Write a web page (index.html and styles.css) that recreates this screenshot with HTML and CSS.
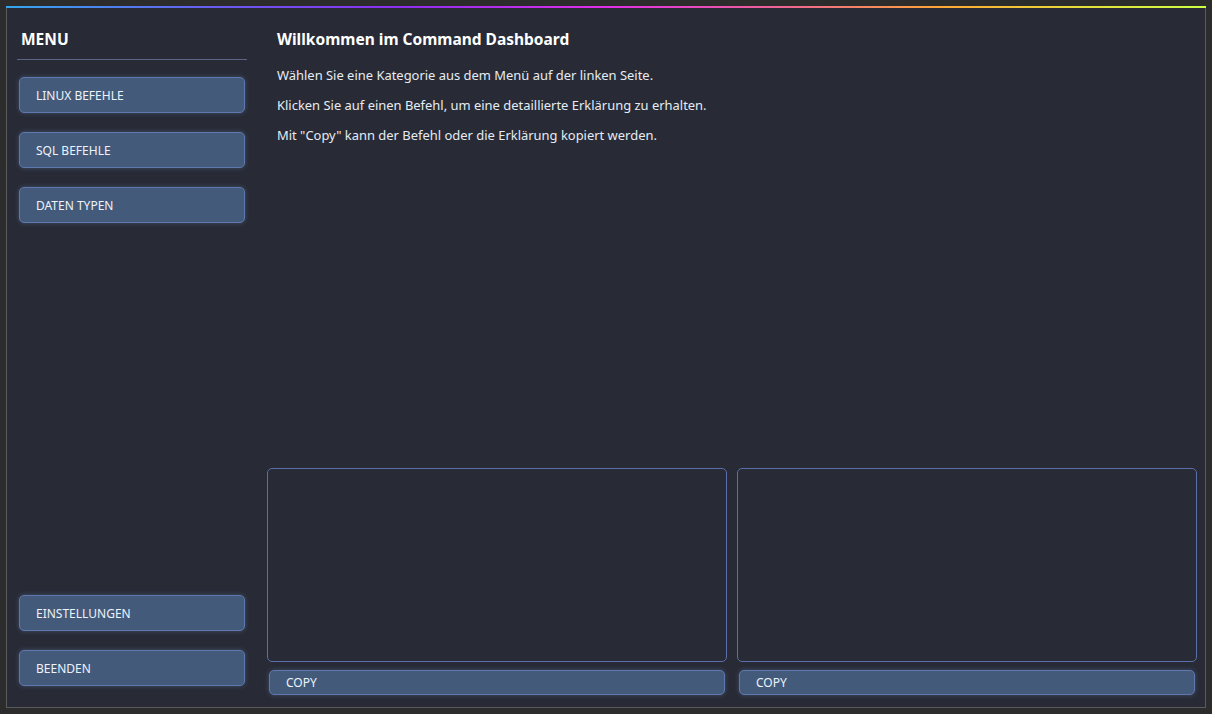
FILE: index.html
```html
<!DOCTYPE html>
<html lang="de">
<head>
<meta charset="utf-8">
<title>Command Dashboard</title>
<link rel="stylesheet" href="styles.css">
</head>
<body>
<div class="frame">
  <div class="app">
    <aside class="sidebar">
      <div class="menu-title">MENU</div>
      <div class="nav">
        <button class="btn nav-btn">LINUX BEFEHLE</button>
        <button class="btn nav-btn">SQL BEFEHLE</button>
        <button class="btn nav-btn">DATEN TYPEN</button>
      </div>
      <div class="nav nav-bottom">
        <button class="btn nav-btn">EINSTELLUNGEN</button>
        <button class="btn nav-btn">BEENDEN</button>
      </div>
    </aside>
    <main class="main">
      <h1 class="title">Willkommen im Command Dashboard</h1>
      <p class="info">Wählen Sie eine Kategorie aus dem Menü auf der linken Seite.</p>
      <p class="info">Klicken Sie auf einen Befehl, um eine detaillierte Erklärung zu erhalten.</p>
      <p class="info">Mit "Copy" kann der Befehl oder die Erklärung kopiert werden.</p>
      <div class="panels">
        <div class="panel">
          <div class="textbox"></div>
          <button class="btn copy-btn">COPY</button>
        </div>
        <div class="panel">
          <div class="textbox"></div>
          <button class="btn copy-btn">COPY</button>
        </div>
      </div>
    </main>
  </div>
</div>
</body>
</html>
```

FILE: styles.css
```css
* { box-sizing: border-box; }
html, body {
  margin: 0;
  padding: 0;
  background: #2c2c2c;
  height: 100%;
}
body {
  font-family: "Noto Sans", "Open Sans", sans-serif;
  color: #eef2f8;
}
.frame {
  padding: 6px;
  height: 714px;
}
.app {
  height: 702px;
  display: flex;
  background: #282b36;
  border-left: 1px solid #5a5a5a;
  border-right: 1px solid #5a5a5a;
  border-bottom: 1px solid #5a5a5a;
  border-top: 2px solid transparent;
  position: relative;
}
.app::before {
  content: "";
  position: absolute;
  left: -1px;
  right: -1px;
  top: -2px;
  height: 2px;
  background: linear-gradient(90deg, #35a6ee 0%, #6a5af0 18%, #8e2ef0 33%, #e22ee8 50%, #f06a8a 66%, #ffa735 78%, #e6e03a 90%, #ccff44 100%);
}
.sidebar {
  width: 250px;
  padding: 21px 10px 21px 10px;
  display: flex;
  flex-direction: column;
}
.menu-title {
  font-size: 15.5px;
  font-weight: 700;
  line-height: 20px;
  padding: 0 4px 10px 4px;
  border-bottom: 1px solid #5d6584;
  color: #ffffff;
}
.nav {
  display: flex;
  flex-direction: column;
  gap: 19px;
  padding: 17px 2px 0 2px;
}
.nav-bottom {
  margin-top: auto;
  padding-top: 0;
}
.btn {
  font-family: inherit;
  display: flex;
  align-items: center;
  background: #435a7a;
  border: 1px solid #5f79b0;
  border-radius: 5px;
  color: #eef3fb;
  text-align: left;
  cursor: pointer;
  box-shadow: 0 0 5px rgba(120, 150, 200, 0.35);
}
.nav-btn {
  height: 36px;
  font-size: 12px;
  padding: 0 16px;
}
.main {
  flex: 1;
  padding: 21px 8px 12px 10px;
  display: flex;
  flex-direction: column;
  min-width: 0;
}
.title {
  margin: 0 0 11px 0;
  font-size: 15.5px;
  font-weight: 700;
  line-height: 20px;
  padding-left: 10px;
  color: #ffffff;
}
.info {
  margin: 0;
  font-size: 12.95px;
  line-height: 30px;
  padding-left: 10px;
  color: #e6ebf3;
}
.panels {
  margin-top: auto;
  display: flex;
  gap: 10px;
}
.panel {
  flex: 1;
  display: flex;
  flex-direction: column;
  gap: 8px;
}
.textbox {
  height: 194px;
  border: 1px solid #5a6eaa;
  border-radius: 5px;
  background: #282b36;
}
.copy-btn {
  height: 25px;
  margin: 0 2px;
  font-size: 12px;
  padding: 0 16px;
}
```
